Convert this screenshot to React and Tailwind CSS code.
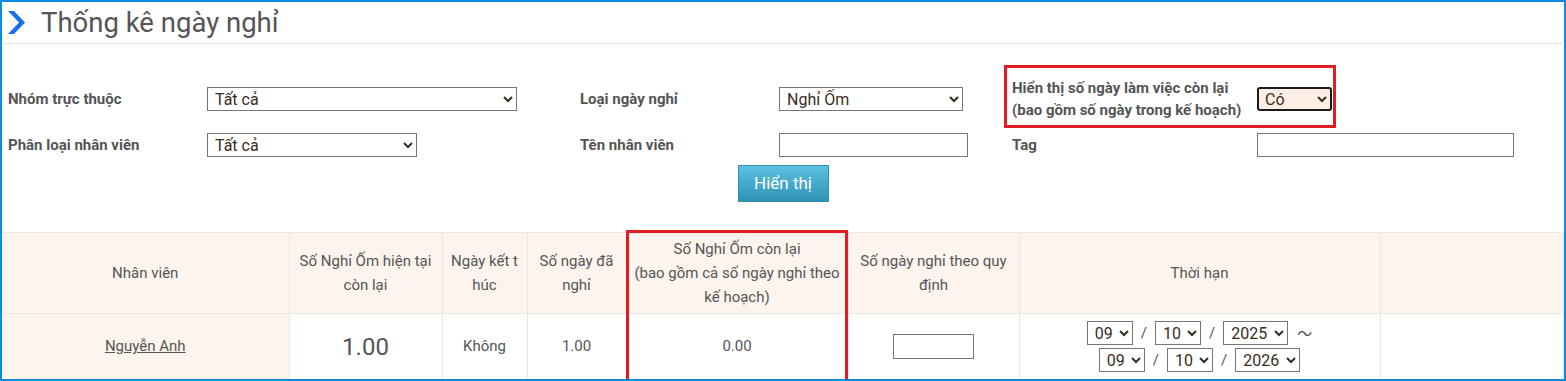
import React from "react";

const selectCls =
  "h-[24px] border border-[#767676] bg-white text-[16px] text-[#3a2c1c] pl-[3px] outline-none";

const labelCls = "text-[15px] font-bold";

const DateSelect = ({ value, w }) => (
  <select className={`${selectCls} ${w}`} defaultValue={value}>
    <option>{value}</option>
  </select>
);

export default function App() {
  return (
    <div className="w-[1566px] h-[381px] overflow-hidden border-2 border-[#0b8ce0] bg-white font-['Roboto',sans-serif] text-[#555]">
      {/* tiêu đề */}
      <div className="mx-[3px] h-[42px] pl-[3px] flex items-center border-b border-dotted border-[#c8c8c8]">
        <svg width="17" height="24" viewBox="0 0 17 24" className="mt-[1px]">
          <path d="M0 0 H6 L17 11.5 L6 23 H0 L11 11.5 Z" fill="#1a6ef2" />
        </svg>
        <h1 className="ml-[16px] mt-[1px] text-[27.5px] leading-none text-[#555]">Thống kê ngày nghỉ</h1>
      </div>

      {/* bộ lọc */}
      <div className="mt-[21px] h-[63px] flex items-center">
        <div className={`${labelCls} mt-[5px] w-[205px] pl-[6px]`}>Nhóm trực thuộc</div>
        <select className={`${selectCls} mt-[5px] w-[310px]`} defaultValue="Tất cả">
          <option>Tất cả</option>
        </select>
        <div className={`${labelCls} mt-[5px] ml-[63px] w-[199px]`}>Loại ngày nghỉ</div>
        <select className={`${selectCls} mt-[5px] w-[184px]`} defaultValue="Nghỉ Ốm">
          <option>Nghỉ Ốm</option>
        </select>
        <div className="ml-[41px] w-[332px] h-[63px] border-[3px] border-[#e31b23] flex items-center pl-[5px] pt-[5px]">
          <div className={`${labelCls} w-[245px] leading-[22px]`}>
            Hiển thị số ngày làm việc còn lại
            <br />
            (bao gồm số ngày trong kế hoạch)
          </div>
          <select
            className="w-[75px] h-[24px] rounded-[3px] border-2 border-[#1a1a1a] bg-[#fdeee5] text-[16px] text-[#3a2c1c] pl-[2px] outline-none"
            defaultValue="Có"
          >
            <option>Có</option>
          </select>
        </div>
      </div>

      <div className="mt-[5px] h-[24px] flex items-center">
        <div className={`${labelCls} w-[205px] pl-[6px]`}>Phân loại nhân viên</div>
        <select className={`${selectCls} w-[210px]`} defaultValue="Tất cả">
          <option>Tất cả</option>
        </select>
        <div className={`${labelCls} ml-[163px] w-[199px]`}>Tên nhân viên</div>
        <input className="w-[189px] h-[24px] border border-[#767676] bg-white" />
        <div className={`${labelCls} ml-[44px] w-[245px]`}>Tag</div>
        <input className="w-[257px] h-[24px] border border-[#767676] bg-white" />
      </div>

      <div className="mt-[8px] flex justify-center">
        <button className="w-[91px] h-[37px] border border-[#2f8fb0] bg-gradient-to-b from-[#5cc1e0] to-[#2f93b4] text-white text-[17px]">
          Hiển thị
        </button>
      </div>

      {/* bảng */}
      <div className="relative mt-[30px]">
        <table className="table-fixed border-collapse w-[1561px] text-[15px] text-[#555] text-center">
          <colgroup>
            <col className="w-[287px]" />
            <col className="w-[153px]" />
            <col className="w-[85px]" />
            <col className="w-[99px]" />
            <col className="w-[222px]" />
            <col className="w-[171px]" />
            <col className="w-[361px]" />
            <col className="w-[183px]" />
          </colgroup>
          <thead>
            <tr className="h-[81px] bg-[#fdf4ee] leading-[24px]">
              <th className="font-normal border border-l-0 border-[#e9e6e4]">Nhân viên</th>
              <th className="font-normal border border-[#e9e6e4]">
                Số Nghỉ Ốm hiện tại
                <br />
                còn lại
              </th>
              <th className="font-normal border border-[#e9e6e4]">
                Ngày kết t
                <br />
                húc
              </th>
              <th className="font-normal border border-[#e9e6e4]">
                Số ngày đã
                <br />
                nghỉ
              </th>
              <th className="font-normal border border-[#e9e6e4]">
                Số Nghỉ Ốm còn lại
                <br />
                (bao gồm cả số ngày nghỉ theo
                <br />
                kế hoạch)
              </th>
              <th className="font-normal border border-[#e9e6e4]">
                Số ngày nghỉ theo quy
                <br />
                định
              </th>
              <th className="font-normal border border-[#e9e6e4]">Thời hạn</th>
              <th className="font-normal border border-[#e9e6e4]"></th>
            </tr>
          </thead>
          <tbody>
            <tr className="h-[66px]">
              <td className="border border-l-0 border-[#e9e6e4] bg-[#fdf4ee]">
                <a href="#" className="underline text-[#555]">Nguyễn Anh</a>
              </td>
              <td className="border border-[#e9e6e4] text-[24px]">1.00</td>
              <td className="border border-[#e9e6e4]">Không</td>
              <td className="border border-[#e9e6e4]">1.00</td>
              <td className="border border-[#e9e6e4]">0.00</td>
              <td className="border border-[#e9e6e4]">
                <input className="w-[81px] h-[25px] border border-[#767676] bg-white" />
              </td>
              <td className="border border-[#e9e6e4]">
                <div className="flex flex-col items-center gap-[3px]">
                  <div className="flex items-center gap-[8px]">
                    <DateSelect value="09" w="w-[46px]" />
                    <span>/</span>
                    <DateSelect value="10" w="w-[46px]" />
                    <span>/</span>
                    <DateSelect value="2025" w="w-[65px]" />
                    <span className="ml-[1px] text-[15px] font-['Noto_Sans_CJK_JP',sans-serif]">〜</span>
                  </div>
                  <div className="flex items-center gap-[8px]">
                    <DateSelect value="09" w="w-[46px]" />
                    <span>/</span>
                    <DateSelect value="10" w="w-[46px]" />
                    <span>/</span>
                    <DateSelect value="2026" w="w-[65px]" />
                  </div>
                </div>
              </td>
              <td className="border border-[#e9e6e4]"></td>
            </tr>
          </tbody>
        </table>
        <div className="absolute left-[624px] top-[-2px] w-[222px] h-[152px] border-[3px] border-[#e31b23] pointer-events-none" />
      </div>
    </div>
  );
}
